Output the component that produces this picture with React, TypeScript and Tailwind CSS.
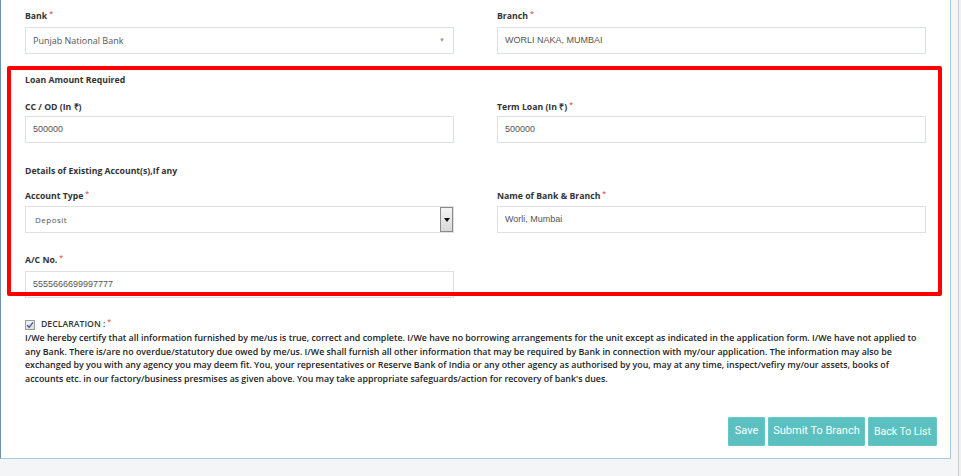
import React from 'react';

const Req = () => <sup className="text-[#e52b2b] ml-[2px] text-[7px] font-normal">*</sup>;

const Label: React.FC<{ text: string; req?: boolean }> = ({ text, req }) => (
  <div className="h-[12px] leading-[12px] text-[8.7px] font-bold text-[#333]">
    {text}
    {req && <Req />}
  </div>
);

const TextBox: React.FC<{ value: string; font?: string }> = ({ value, font = "font-['Liberation_Sans',Arial,sans-serif]" }) => (
  <div className={`h-[27px] border border-[#dde1e4] bg-white flex items-center pl-[7px] text-[9px] text-[#555] ${font}`}>
    {value}
  </div>
);

const declaration = [
  'I/We hereby certify that all information furnished by me/us is true, correct and complete. I/We have no borrowing arrangements for the unit except as indicated in the application form. I/We have not applied to',
  'any Bank. There is/are no overdue/statutory due owed by me/us. I/We shall furnish all other information that may be required by Bank in connection with my/our application. The information may also be',
  'exchanged by you with any agency you may deem fit. You, your representatives or Reserve Bank of India or any other agency as authorised by you, may at any time, inspect/vefiry my/our assets, books of',
  "accounts etc. in our factory/business presmises as given above. You may take appropriate safeguards/action for recovery of bank's dues.",
];

export default function App() {
  return (
    <div className="w-[961px] h-[476px] bg-[#f4f5f6] flex overflow-hidden font-['Open_Sans',sans-serif]">
      <div className="relative w-[951px] h-[459px] bg-white border-b border-r border-[#a7cbe0] border-l border-l-[#6f93ae] px-[24px] pt-[10px]">
        {/* Bank / Branch */}
        <div className="grid grid-cols-2 gap-[43px]">
          <div>
            <Label text="Bank" req />
            <div className="mt-[5px] h-[27px] border border-[#dde1e4] bg-white flex items-center justify-between pl-[7px] pr-[8px] text-[9px] text-[#555]">
              <span>Punjab National Bank</span>
              <span className="text-[6px] text-[#999]">▼</span>
            </div>
          </div>
          <div>
            <Label text="Branch" req />
            <div className="mt-[5px]">
              <TextBox value="WORLI NAKA, MUMBAI" />
            </div>
          </div>
        </div>

        {/* Loan Amount */}
        <div className="mt-[20px] h-[12px] leading-[12px] text-[8.7px] font-bold text-[#333]">Loan Amount Required</div>
        <div className="mt-[15px] grid grid-cols-2 gap-[43px]">
          <div>
            <Label text="CC / OD  (In ₹)" />
            <div className="mt-[3px]">
              <TextBox value="500000" />
            </div>
          </div>
          <div>
            <Label text="Term Loan  (In ₹)" req />
            <div className="mt-[3px]">
              <TextBox value="500000" />
            </div>
          </div>
        </div>

        {/* Existing accounts */}
        <div className="mt-[22px] h-[12px] leading-[12px] text-[8.7px] font-bold text-[#333]">Details of Existing Account(s),If any</div>
        <div className="mt-[13px] grid grid-cols-2 gap-[43px]">
          <div>
            <Label text="Account Type" req />
            <div className="mt-[4px] h-[27px] border border-[#dde1e4] bg-white flex items-stretch text-[8px] text-[#555]">
              <div className="flex-1 flex items-center pl-[9px] tracking-[0.5px]">Deposit</div>
              <div className="w-[13px] border border-[#8a8a8a] bg-gradient-to-b from-[#f4f4f4] to-[#d8d8d8] flex items-center justify-center">
                <svg width="6" height="4" viewBox="0 0 6 4"><path d="M0 0h6L3 4z" fill="#111" /></svg>
              </div>
            </div>
          </div>
          <div>
            <Label text="Name of Bank & Branch" req />
            <div className="mt-[4px]">
              <TextBox value="Worli, Mumbai" />
            </div>
          </div>
        </div>

        <div className="mt-[21px] grid grid-cols-2 gap-[43px]">
          <div>
            <Label text="A/C No." req />
            <div className="mt-[5px]">
              <TextBox value="5555666699997777" />
            </div>
          </div>
        </div>

        {/* Declaration */}
        <div className="mt-[21px] flex items-center gap-[6px] h-[12px]">
          <div className="w-[10px] h-[10px] border border-[#9a9a9a] bg-gradient-to-b from-[#f0f0f0] to-[#dcdcdc] flex items-center justify-center">
            <svg width="8" height="8" viewBox="0 0 8 8"><path d="M1.2 4.2 3.2 6.3 7 1.3" fill="none" stroke="#3a55a8" strokeWidth="1.3" /></svg>
          </div>
          <span className="text-[8.7px] font-semibold text-[#333]">
            DECLARATION :<Req />
          </span>
        </div>
        <div className="mt-[1px] text-[8.85px] font-semibold leading-[13.5px] text-[#222] whitespace-nowrap">
          {declaration.map((l, i) => (
            <div key={i}>{l}</div>
          ))}
        </div>

        {/* Buttons */}
        <div className="mt-[31px] flex justify-end gap-[3px] mr-[-11px] font-['Roboto',sans-serif] text-[11px] text-white">
          <button className="w-[37px] h-[29px] bg-[#5bc0bf] border border-[#67c7c6] rounded-[1px]">Save</button>
          <button className="w-[97px] h-[29px] bg-[#5bc0bf] border border-[#67c7c6] rounded-[1px]">Submit To Branch</button>
          <button className="w-[69px] h-[29px] bg-[#5bc0bf] border border-[#67c7c6] rounded-[1px] text-[10.5px]">Back To List</button>
        </div>

        {/* annotation box */}
        <div className="absolute left-[6px] top-[66px] w-[935px] h-[230px] border-[4px] border-[#ff0000] rounded-[2px] pointer-events-none" />
      </div>
      <div className="flex-1 h-full flex justify-end">
        <div className="w-[3px] h-full border-l border-[#c9d2d8] bg-[#f0f0f0]" />
      </div>
    </div>
  );
}
